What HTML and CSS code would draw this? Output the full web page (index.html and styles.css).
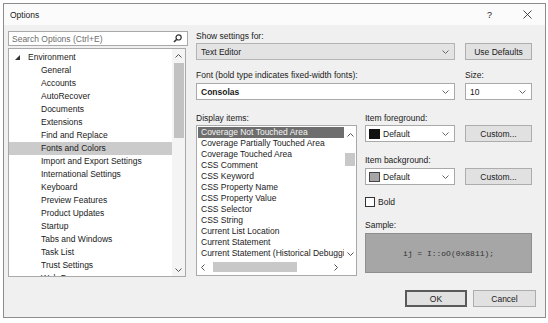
FILE: index.html
```html
<!DOCTYPE html>
<html lang="en">
<head>
  <meta charset="UTF-8" />
  <title>Options</title>
  <link rel="stylesheet" href="styles.css">
</head>
<body>

<div class="window">
  <div class="titlebar">
    <span class="title">Options</span>
    <span class="title-help">?</span>
    <svg class="title-close" width="9" height="9" viewBox="0 0 9 9"><path d="M0.5 0.5L8.5 8.5M8.5 0.5L0.5 8.5" stroke="#333" stroke-width="0.9"/></svg>
  </div>

  <div class="content">
    <div class="nav">
      <div class="search">
        <span>Search Options (Ctrl+E)</span>
        <svg width="9" height="9" viewBox="0 0 9 9"><circle cx="5.6" cy="3.4" r="2.6" fill="none" stroke="#333" stroke-width="1.2"/><path d="M3.8 5.2L1 8" stroke="#333" stroke-width="1.6"/></svg>
      </div>
      <div class="tree">
        <ul class="tree-items">
          <li class="tree-root"><svg class="expander" width="5" height="5" viewBox="0 0 5 5"><polygon points="5,0 5,5 0,5" fill="#333"/></svg>Environment</li>
          <li>General</li>
          <li>Accounts</li>
          <li>AutoRecover</li>
          <li>Documents</li>
          <li>Extensions</li>
          <li>Find and Replace</li>
          <li class="selected">Fonts and Colors</li>
          <li>Import and Export Settings</li>
          <li>International Settings</li>
          <li>Keyboard</li>
          <li>Preview Features</li>
          <li>Product Updates</li>
          <li>Startup</li>
          <li>Tabs and Windows</li>
          <li>Task List</li>
          <li>Trust Settings</li>
          <li>Web Browser</li>
        </ul>
        <div class="vscroll tree-scroll">
          <div class="arrow arrow-up"><svg width="7" height="4" viewBox="0 0 7 4"><path d="M0.5 3.5L3.5 0.5L6.5 3.5" fill="none" stroke="#555"/></svg></div>
          <div class="track"><div class="thumb"></div></div>
          <div class="arrow arrow-down"><svg width="7" height="4" viewBox="0 0 7 4"><path d="M0.5 0.5L3.5 3.5L6.5 0.5" fill="none" stroke="#555"/></svg></div>
        </div>
      </div>
    </div>

    <div class="settings">
      <div class="field-label">Show settings for:</div>
      <div class="row row-first">
        <div class="combo combo-readonly wide">
          <span>Text Editor</span>
          <svg width="7" height="4" viewBox="0 0 7 4"><path d="M0.5 0.5L3.5 3.5L6.5 0.5" fill="none" stroke="#666"/></svg>
        </div>
        <button class="btn side">Use Defaults</button>
      </div>

      <div class="row row-labels">
        <div class="field-label wide">Font (bold type indicates fixed-width fonts):</div>
        <div class="field-label side">Size:</div>
      </div>
      <div class="row row-tight">
        <div class="combo wide">
          <span class="font-name">Consolas</span>
          <svg width="7" height="4" viewBox="0 0 7 4"><path d="M0.5 0.5L3.5 3.5L6.5 0.5" fill="none" stroke="#666"/></svg>
        </div>
        <div class="combo side">
          <span>10</span>
          <svg width="7" height="4" viewBox="0 0 7 4"><path d="M0.5 0.5L3.5 3.5L6.5 0.5" fill="none" stroke="#666"/></svg>
        </div>
      </div>

      <div class="lower">
        <div class="items-col">
          <div class="field-label">Display items:</div>
          <div class="items-list">
            <ul class="items">
              <li class="selected">Coverage Not Touched Area</li>
              <li>Coverage Partially Touched Area</li>
              <li>Coverage Touched Area</li>
              <li>CSS Comment</li>
              <li>CSS Keyword</li>
              <li>CSS Property Name</li>
              <li>CSS Property Value</li>
              <li>CSS Selector</li>
              <li>CSS String</li>
              <li>Current List Location</li>
              <li>Current Statement</li>
              <li>Current Statement (Historical Debugging)</li>
            </ul>
            <div class="vscroll items-scroll">
              <div class="arrow"><svg width="7" height="4" viewBox="0 0 7 4"><path d="M0.5 3.5L3.5 0.5L6.5 3.5" fill="none" stroke="#555"/></svg></div>
              <div class="track"><div class="thumb"></div></div>
              <div class="arrow"><svg width="7" height="4" viewBox="0 0 7 4"><path d="M0.5 0.5L3.5 3.5L6.5 0.5" fill="none" stroke="#555"/></svg></div>
            </div>
            <div class="hscroll">
              <div class="arrow"><svg width="4" height="7" viewBox="0 0 4 7"><path d="M3.5 0.5L0.5 3.5L3.5 6.5" fill="none" stroke="#555"/></svg></div>
              <div class="track"><div class="thumb"></div></div>
              <div class="arrow"><svg width="4" height="7" viewBox="0 0 4 7"><path d="M0.5 0.5L3.5 3.5L0.5 6.5" fill="none" stroke="#555"/></svg></div>
            </div>
          </div>
        </div>

        <div class="props-col">
          <div class="field-label">Item foreground:</div>
          <div class="row row-first">
            <div class="combo color-combo">
              <span class="swatch swatch-black"></span>
              <span class="combo-text">Default</span>
              <svg width="7" height="4" viewBox="0 0 7 4"><path d="M0.5 0.5L3.5 3.5L6.5 0.5" fill="none" stroke="#666"/></svg>
            </div>
            <button class="btn side">Custom...</button>
          </div>

          <div class="field-label spaced">Item background:</div>
          <div class="row row-tight">
            <div class="combo color-combo">
              <span class="swatch swatch-gray"></span>
              <span class="combo-text">Default</span>
              <svg width="7" height="4" viewBox="0 0 7 4"><path d="M0.5 0.5L3.5 3.5L6.5 0.5" fill="none" stroke="#666"/></svg>
            </div>
            <button class="btn side">Custom...</button>
          </div>

          <label class="check">
            <span class="checkbox"></span>Bold
          </label>

          <div class="field-label spaced">Sample:</div>
          <div class="sample">ij = I::oO(0x8811);</div>
        </div>
      </div>
    </div>
  </div>

  <div class="footer">
    <button class="btn btn-ok">OK</button>
    <button class="btn btn-cancel">Cancel</button>
  </div>
</div>

</body>
</html>
```

FILE: styles.css
```css
body {
  margin: 0;
  background: #fff;
  font-family: "Liberation Sans", "Noto Sans", sans-serif;
  font-size: 8.5px;
  color: #1a1a1a;
}
.window {
  width: 543px;
  height: 315px;
  margin: 3px 0 0 3px;
  box-sizing: border-box;
  border: 1px solid #8c8c8c;
  background: #f0f0f0;
  display: flex;
  flex-direction: column;
}
.titlebar {
  height: 21px;
  flex: none;
  background: #fbfbfb;
  display: flex;
  align-items: center;
  padding: 0 13px 0 6px;
}
.title {
  flex: 1;
}
.title-help {
  margin-right: 31px;
  font-size: 9px;
}

.content {
  display: flex;
  gap: 8px;
  padding: 6px 12px 0 4px;
}
.nav {
  width: 180px;
  flex: none;
}
.search {
  height: 15px;
  box-sizing: border-box;
  border: 1px solid #a9a9a9;
  background: #fff;
  display: flex;
  align-items: center;
  justify-content: space-between;
  padding: 0 5px 0 3px;
  color: #6d6d6d;
}
.tree {
  margin-top: 2px;
  width: 178px;
  height: 229px;
  box-sizing: border-box;
  border: 1px solid #a9a9a9;
  background: #fff;
  display: flex;
}
.tree-items {
  list-style: none;
  margin: 0;
  padding: 2px 0 0;
  flex: 1;
  overflow: hidden;
}
.tree-items li {
  height: 13px;
  line-height: 13px;
  padding-left: 32px;
  white-space: nowrap;
}
.tree-items .tree-root {
  display: flex;
  align-items: center;
  padding-left: 6px;
}
.expander {
  margin-right: 8px;
}
.tree-items .selected {
  background: #cbcbcb;
}

.vscroll {
  display: flex;
  flex-direction: column;
  background: #f4f4f4;
}
.vscroll .arrow,
.hscroll .arrow {
  display: flex;
  align-items: center;
  justify-content: center;
  flex: none;
}
.vscroll .track,
.hscroll .track {
  flex: 1;
}
.tree-scroll {
  width: 13px;
  flex: none;
}
.tree-scroll .arrow-up {
  height: 14px;
}
.tree-scroll .arrow-down {
  height: 12px;
}
.tree-scroll .thumb {
  width: 10px;
  height: 75px;
  margin: 0 auto;
  background: #c2c2c2;
}

.settings {
  width: 336px;
  flex: none;
}
.field-label {
  line-height: 10px;
  height: 10px;
  white-space: nowrap;
}
.row {
  display: flex;
  gap: 10px;
}
.row-first {
  margin-top: 2px;
}
.row-labels {
  margin-top: 10px;
}
.row-tight {
  margin-top: 3px;
}
.wide {
  width: 259px;
}
.side {
  width: 67px;
}
.combo {
  height: 17px;
  box-sizing: border-box;
  border: 1px solid #a9a9a9;
  background: #fff;
  display: flex;
  align-items: center;
  justify-content: space-between;
  padding: 0 5px 0 4px;
}
.combo-readonly {
  background: #e3e3e3;
  border-color: #b4b4b4;
}
.font-name {
  font-weight: bold;
}
.btn {
  font: inherit;
  color: inherit;
  height: 17px;
  box-sizing: border-box;
  border: 1px solid #adadad;
  background: #e1e1e1;
  padding: 0;
}

.lower {
  display: flex;
  gap: 8px;
  margin-top: 13px;
}
.items-col {
  width: 161px;
  flex: none;
}
.items-list {
  margin-top: 2px;
  height: 151px;
  box-sizing: border-box;
  border: 1px solid #a9a9a9;
  background: #fff;
  padding-bottom: 2px;
  display: grid;
  grid-template-columns: 1fr 12px;
  grid-template-rows: 1fr 11px;
}
.items {
  list-style: none;
  margin: 0;
  padding: 1px 0 0 1px;
  overflow: hidden;
}
.items li {
  height: 11px;
  line-height: 11px;
  padding-left: 3px;
  white-space: nowrap;
}
.items .selected {
  background: #6e6e6e;
  color: #f5f5f5;
}
.items-scroll {
  background: #fff;
}
.items-scroll .arrow {
  height: 17px;
}
.items-scroll .thumb {
  width: 10px;
  height: 13px;
  margin: 10px auto 0;
  background: #c8c8c8;
}
.hscroll {
  display: flex;
}
.hscroll .arrow {
  width: 12px;
}
.hscroll .arrow:last-child {
  width: 16px;
}
.hscroll .thumb {
  width: 84px;
  height: 10px;
  margin: 0 0 0 4px;
  background: #c8c8c8;
}

.props-col {
  width: 167px;
  flex: none;
}
.props-col .spaced {
  margin-top: 13px;
}
.color-combo {
  width: 90px;
  padding-left: 3px;
  justify-content: flex-start;
}
.combo-text {
  flex: 1;
  margin-left: 3px;
}
.swatch {
  width: 11px;
  height: 10px;
  box-sizing: border-box;
}
.swatch-black {
  background: #111;
}
.swatch-gray {
  background: #a6a6a6;
  border: 1px solid #444;
}
.check {
  display: flex;
  align-items: center;
  gap: 3px;
  height: 11px;
  margin-top: 11px;
}
.checkbox {
  width: 10px;
  height: 10px;
  box-sizing: border-box;
  border: 1px solid #333;
  background: #fff;
}
.sample {
  margin-top: 3px;
  height: 40px;
  box-sizing: border-box;
  border: 1px solid #8e8e8e;
  background: #a6a6a6;
  display: flex;
  align-items: center;
  justify-content: center;
  font-family: "Liberation Mono", "DejaVu Sans Mono", monospace;
  font-size: 8px;
  color: #333;
}

.footer {
  display: flex;
  justify-content: flex-end;
  gap: 6px;
  padding: 13px 9px 0 0;
}
.btn-ok {
  width: 62px;
  border: 2px solid #5a5a5a;
}
.btn-cancel {
  width: 63px;
}
```
